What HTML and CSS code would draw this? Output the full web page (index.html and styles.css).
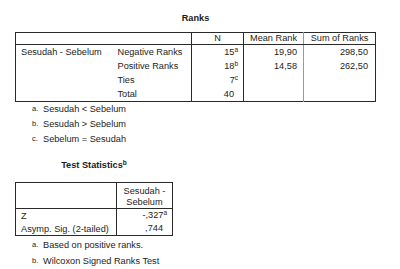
FILE: index.html
```html
<!DOCTYPE html>
<html>
<head>
<meta charset="utf-8">
<link rel="stylesheet" href="styles.css">
</head>
<body>
<div class="page">
  <section class="block ranks">
    <div class="title">Ranks</div>
    <table class="spss ranks-table">
      <colgroup>
        <col class="c-lab1"><col class="c-lab2"><col class="c-n"><col class="c-mean"><col class="c-sum">
      </colgroup>
      <thead>
        <tr class="head-row">
          <th colspan="2" class="corner"></th>
          <th class="sep-dark">N</th>
          <th class="sep-dark">Mean Rank</th>
          <th class="sep-light">Sum of Ranks</th>
        </tr>
      </thead>
      <tbody>
        <tr class="r1">
          <td class="lab lab-group" rowspan="4">Sesudah - Sebelum</td>
          <td class="lab lab-sub">Negative Ranks</td>
          <td class="num n sep-dark">15<sup>a</sup></td>
          <td class="num mean sep-dark">19,90</td>
          <td class="num sum sep-light">298,50</td>
        </tr>
        <tr class="r2">
          <td class="lab lab-sub">Positive Ranks</td>
          <td class="num n sep-dark">18<sup>b</sup></td>
          <td class="num mean sep-dark">14,58</td>
          <td class="num sum sep-light">262,50</td>
        </tr>
        <tr class="r3">
          <td class="lab lab-sub">Ties</td>
          <td class="num n sep-dark">7<sup>c</sup></td>
          <td class="num mean sep-dark"></td>
          <td class="num sum sep-light"></td>
        </tr>
        <tr class="r4">
          <td class="lab lab-sub">Total</td>
          <td class="num n sep-dark">40</td>
          <td class="num mean sep-dark"></td>
          <td class="num sum sep-light"></td>
        </tr>
      </tbody>
    </table>
    <ul class="notes notes-ranks">
      <li><span class="mark">a.</span>Sesudah &lt; Sebelum</li>
      <li><span class="mark">b.</span>Sesudah &gt; Sebelum</li>
      <li><span class="mark">c.</span>Sebelum = Sesudah</li>
    </ul>
  </section>

  <section class="block stats">
    <div class="title stats-title">Test Statistics<sup>b</sup></div>
    <table class="spss stats-table">
      <colgroup>
        <col class="s-lab"><col class="s-val">
      </colgroup>
      <thead>
        <tr class="shead-row">
          <th class="corner"></th>
          <th class="sep-dark shead">Sesudah -<br>Sebelum</th>
        </tr>
      </thead>
      <tbody>
        <tr class="s1">
          <td class="lab slab">Z</td>
          <td class="num sval sep-dark">-,327<sup>a</sup></td>
        </tr>
        <tr class="s2">
          <td class="lab slab">Asymp. Sig. (2-tailed)</td>
          <td class="num sval sep-dark">,744</td>
        </tr>
      </tbody>
    </table>
    <ul class="notes notes-stats">
      <li><span class="mark">a.</span>Based on positive ranks.</li>
      <li><span class="mark">b.</span>Wilcoxon Signed Ranks Test</li>
    </ul>
  </section>
</div>
</body>
</html>
```

FILE: styles.css
```css
html, body {
  margin: 0;
  padding: 0;
  background: #ffffff;
}

.page {
  padding: 12px 0 0 15px;
  font-family: "Liberation Sans", Arial, sans-serif;
  font-size: 9.2px;
  color: #1c1c1c;
}

.block {
  display: flex;
  flex-direction: column;
}

.ranks {
  width: 361px;
}

.stats {
  width: 158px;
  margin-top: 12px;
}

.title {
  text-align: center;
  font-weight: bold;
  line-height: 12px;
  height: 12px;
  margin-bottom: 8px;
}

.stats-title {
  margin-bottom: 11px;
}

.stats-title sup {
  font-size: 6.5px;
  vertical-align: 3px;
  line-height: 0;
}

.spss {
  border-collapse: collapse;
  table-layout: fixed;
  border: 1px solid #2a2a2a;
}

.ranks-table {
  width: 361px;
}

.stats-table {
  width: 158px;
}

.c-lab1 { width: 98px; }
.c-lab2 { width: 78px; }
.c-n { width: 52px; }
.c-mean { width: 60px; }
.c-sum { width: 72px; }

.s-lab { width: 101px; }
.s-val { width: 56px; }

.spss th,
.spss td {
  padding: 0;
  font-weight: normal;
  white-space: nowrap;
  vertical-align: middle;
}

.spss thead th {
  border-bottom: 1px solid #2a2a2a;
  text-align: center;
  line-height: 11px;
}

.head-row {
  height: 12px;
}

.sep-dark {
  border-left: 1px solid #2a2a2a;
}

.sep-light {
  border-left: 1px solid #9a9a9a;
}

.lab {
  text-align: left;
  line-height: 13px;
}

.lab-group {
  vertical-align: top !important;
  padding: 1px 0 0 5px !important;
}

.lab-sub {
  vertical-align: top !important;
  padding: 1px 0 0 4px !important;
}

.r1 { height: 14px; }
.r2 { height: 13px; }
.r3 { height: 14px; }
.r4 { height: 13px; }

.num {
  text-align: right;
  line-height: 13px;
}

.num sup {
  font-size: 6.5px;
  vertical-align: 3px;
  line-height: 0;
  margin-right: -4px;
}

.n { padding-right: 9px !important; }
.mean { padding-right: 6px !important; }
.sum { padding-right: 7px !important; }

.shead {
  line-height: 11px !important;
  padding: 3px 0 0 !important;
}

.s1 { height: 12px; }
.s2 { height: 13px; }

.slab {
  padding-left: 5px !important;
  line-height: 12px;
}

.sval {
  padding-right: 9px !important;
}

.notes {
  list-style: none;
  margin: 0;
  padding: 0 0 0 17px;
}

.notes-ranks li {
  line-height: 15px;
  height: 15px;
}

.notes-stats {
  margin-top: 1px;
}

.notes-stats li {
  line-height: 16px;
  height: 16px;
}

.notes li {
  display: flex;
  align-items: baseline;
}

.mark {
  font-size: 7.5px;
  width: 11px;
  position: relative;
  top: -1px;
}
```
